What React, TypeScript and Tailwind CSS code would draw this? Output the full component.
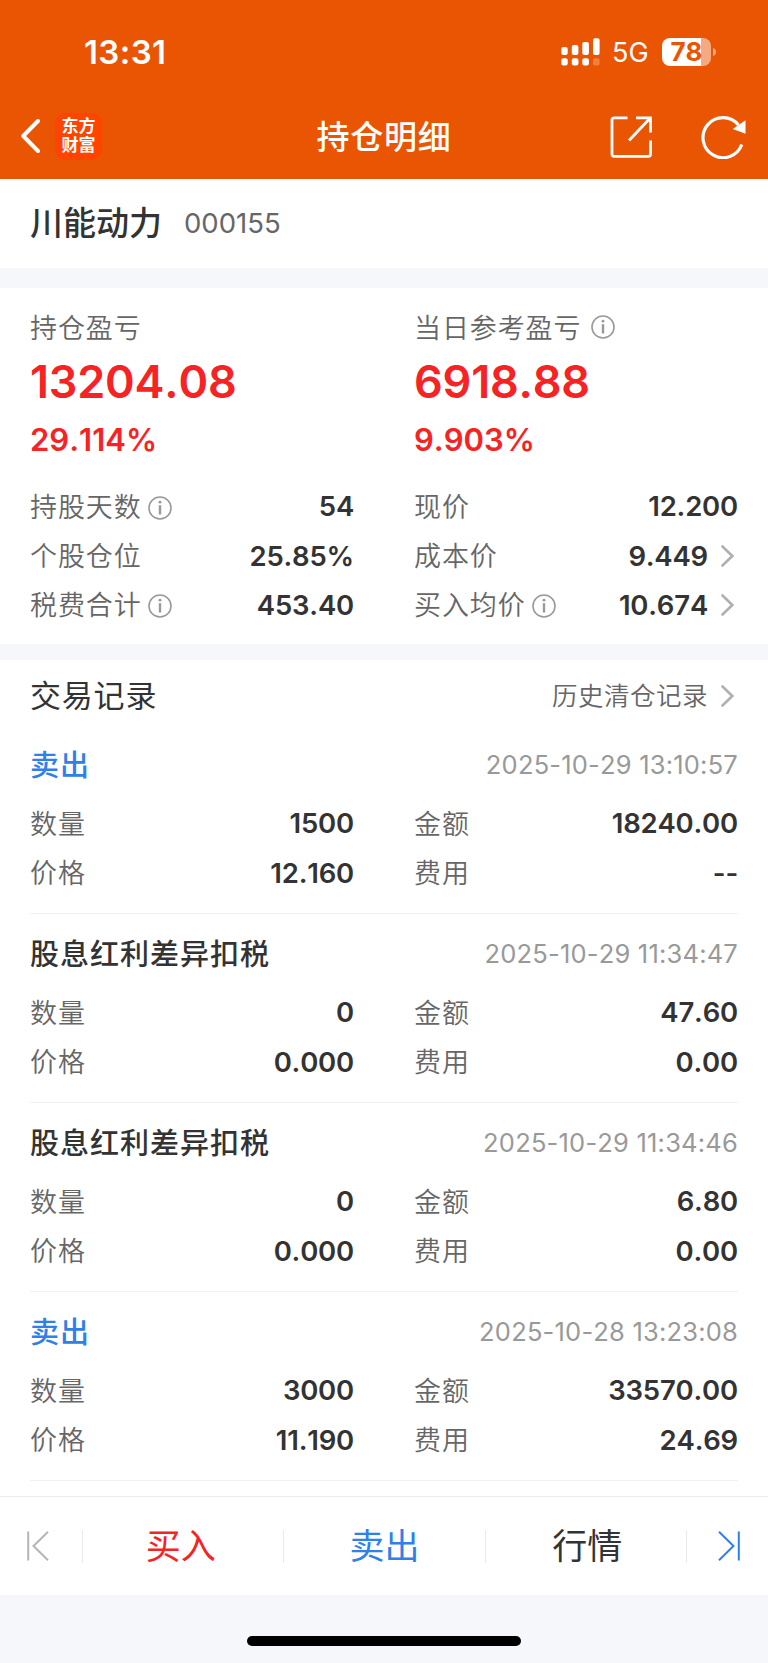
import type { ReactNode } from "react";

const cjk = "font-['Noto_Sans_CJK_SC',sans-serif]";
const num = "font-[Inter,sans-serif] [font-kerning:none]";

function InfoIcon({ className = "" }: { className?: string }) {
  return (
    <svg className={`h-6 w-6 shrink-0 ${className}`} viewBox="0 0 24 24" fill="none">
      <circle cx="12" cy="12" r="11" stroke="#999" strokeWidth="1.6" />
      <circle cx="12" cy="6.2" r="1.4" fill="#999" />
      <path d="M12 9.2v9.3" stroke="#999" strokeWidth="2.4" />
    </svg>
  );
}

function Chevron() {
  return (
    <svg className="mr-[4px] ml-[13px] h-[22px] w-[13px] shrink-0" viewBox="0 0 13 22" fill="none">
      <path d="M1.5 1.5 11.3 11 1.5 20.5" stroke="#b0b0b0" strokeWidth="2.6" strokeLinecap="round" />
    </svg>
  );
}

function Label({ children }: { children: ReactNode }) {
  return (
    <span className={`${cjk} pb-[2px] text-[27px] leading-none font-[350] tracking-[0.9px] text-[#666]`}>
      {children}
    </span>
  );
}

type CellProps = { label: string; value: string; info?: boolean; link?: boolean };

function Cell({ label, value, info, link }: CellProps) {
  return (
    <div className="flex h-[49.2px] items-center">
      <Label>{label}</Label>
      {info && <InfoIcon className="ml-[6px] mt-[2px]" />}
      <span className={`${num} ml-auto pt-[1px] text-[27.5px] leading-none font-semibold tracking-[-0.2px] text-[#333]`}>
        {value}
      </span>
      {link && <Chevron />}
    </div>
  );
}

type Trade = {
  title: string;
  sell?: boolean;
  time: string;
  qty: string;
  price: string;
  amount: string;
  fee: string;
};

const trades: Trade[] = [
  { title: "卖出", sell: true, time: "2025-10-29 13:10:57", qty: "1500", price: "12.160", amount: "18240.00", fee: "--" },
  { title: "股息红利差异扣税", time: "2025-10-29 11:34:47", qty: "0", price: "0.000", amount: "47.60", fee: "0.00" },
  { title: "股息红利差异扣税", time: "2025-10-29 11:34:46", qty: "0", price: "0.000", amount: "6.80", fee: "0.00" },
  { title: "卖出", sell: true, time: "2025-10-28 13:23:08", qty: "3000", price: "11.190", amount: "33570.00", fee: "24.69" },
];

function TradeItem({ t }: { t: Trade }) {
  return (
    <div className="h-[189px] border-b border-[#f1f1f3] pt-[6px]">
      <div className="flex h-[68px] items-center justify-between">
        <span
          className={`${cjk} pb-[3px] text-[29px] leading-none font-medium tracking-[1px] ${t.sell ? "text-[#2f80e8]" : "text-[#333]"}`}
        >
          {t.title}
        </span>
        <span className={`${num} pb-[1px] text-[25.5px] leading-none tracking-[0.2px] text-[#999]`}>{t.time}</span>
      </div>
      <div className="grid grid-cols-2 gap-x-[60px]">
        <Cell label="数量" value={t.qty} />
        <Cell label="金额" value={t.amount} />
        <Cell label="价格" value={t.price} />
        <Cell label="费用" value={t.fee} />
      </div>
    </div>
  );
}

function Summary({ label, value, pct, info }: { label: string; value: string; pct: string; info?: boolean }) {
  return (
    <div>
      <div className="flex h-[50px] items-center">
        <Label>{label}</Label>
        {info && <InfoIcon className="ml-[10px]" />}
      </div>
      <div
        className={`${num} flex h-[59px] items-center text-[45px] leading-none font-semibold tracking-[-0.2px] text-[#f52323]`}
      >
        {value}
      </div>
      <div className={`${num} flex h-[56px] items-center text-[31px] leading-none font-semibold text-[#f52323]`}>
        {pct}
      </div>
    </div>
  );
}

function StatusBar() {
  return (
    <div className="flex h-[103px] items-center pr-[52px] pl-[84px]">
      <span className={`${num} pt-[1px] text-[33px] leading-none font-semibold tracking-[0.4px]`}>13:31</span>
      <svg className="ml-auto h-[28px] w-[39px]" viewBox="0 0 39 28" fill="#fff">
        <rect x="0.3" y="9" width="6.4" height="8" rx="2" />
        <rect x="10.8" y="7" width="6.6" height="10" rx="2" />
        <rect x="21.3" y="4" width="6.6" height="13" rx="2" />
        <rect x="32" y="0.3" width="6.6" height="16.7" rx="2" />
        <rect x="0.3" y="20.3" width="6.4" height="7.2" rx="2" />
        <rect x="10.8" y="20.3" width="6.6" height="7.2" rx="2" />
        <rect x="21.3" y="20.3" width="6.6" height="7.2" rx="2" />
        <rect x="32" y="20.3" width="6.6" height="7.2" rx="2" opacity="0.25" />
      </svg>
      <span className={`${num} ml-[12px] w-[38px] pt-[1px] text-[27px] leading-none`}>5G</span>
      <div className="ml-[12px] flex items-center">
        <div
          className={`${num} flex h-[28px] w-[49px] items-center justify-center rounded-[8px] bg-linear-to-r from-white from-80% to-white/50 to-80% text-[26px] leading-none font-bold text-[#ea5504]`}
        >
          78
        </div>
        <svg className="ml-[2px] h-[8px] w-[3px]" viewBox="0 0 3 8" fill="#fff" opacity="0.5">
          <path d="M0 0C1.8.5 3 2 3 4S1.8 7.5 0 8Z" />
        </svg>
      </div>
    </div>
  );
}

function NavBar() {
  return (
    <div className="grid h-[76px] grid-cols-3 items-center">
      <div className="mt-[-10px] flex items-center pl-[20px]">
        <svg className="h-[36px] w-[20px]" viewBox="0 0 20 36" fill="none">
          <path d="M18 3 3.2 18 18 33" stroke="#fff" strokeWidth="4" strokeLinecap="round" strokeLinejoin="round" />
        </svg>
        <div className="ml-[15px] flex h-[47px] w-[47px] flex-col items-center rounded-[10px] bg-[#ff4400] pt-[4px] font-['Liberation_Serif','Noto_Sans_CJK_SC',serif] text-[17px] leading-[19px] font-bold">
          <span>东方</span>
          <span>财富</span>
        </div>
      </div>
      <h1 className={`${cjk} mt-[-12px] text-center text-[33px] leading-none font-medium tracking-[0.8px]`}>持仓明细</h1>
      <div className="mt-[-9px] flex items-center justify-end pr-[22px]">
        <svg className="h-[44px] w-[44px]" viewBox="0 0 44 44" fill="none" stroke="#fff" strokeWidth="2.8">
          <path d="M18.5 2.8H5a2 2 0 0 0-2 2v34.5a2 2 0 0 0 2 2h34.5a2 2 0 0 0 2-2V25.5" />
          <path d="M27 2.8h14.5V17.5M41.5 2.8 20 25.5" />
        </svg>
        <svg className="ml-[48px] h-[44px] w-[45px]" viewBox="0 0 45 44" fill="none">
          <path d="M40.8 29.5A20 20 0 1 1 37.5 10" stroke="#fff" strokeWidth="3.2" />
          <path d="M44.5 5.2v13.6L31.8 14Z" fill="#fff" />
        </svg>
      </div>
    </div>
  );
}

function Divider() {
  return <div className="h-[33px] w-px shrink-0 bg-[#e9e9eb]" />;
}

function Action({ color, children }: { color: string; children: ReactNode }) {
  return (
    <button className={`${cjk} flex-1 pb-[5px] text-center text-[35px] leading-none ${color}`}>{children}</button>
  );
}

export default function App() {
  return (
    <div className="flex h-[1663px] w-[768px] flex-col overflow-hidden bg-white">
      <header className="h-[179px] shrink-0 bg-[#ea5504] text-white">
        <StatusBar />
        <NavBar />
      </header>

      <section className="flex h-[89px] shrink-0 items-center pl-[30px]">
        <span className={`${cjk} pb-[4px] text-[33px] leading-none font-medium text-[#333]`}>川能动力</span>
        <span className={`${num} ml-[22px] text-[27.5px] leading-none text-[#666]`}>000155</span>
      </section>
      <div className="h-[20px] shrink-0 bg-[#f6f7fa]" />

      <section className="h-[356px] shrink-0 px-[30px] pt-[14px]">
        <div className="grid grid-cols-2 gap-x-[60px]">
          <Summary label="持仓盈亏" value="13204.08" pct="29.114%" />
          <Summary label="当日参考盈亏" value="6918.88" pct="9.903%" info />
        </div>
        <div className="mt-[15px] grid grid-cols-2 gap-x-[60px]">
          <Cell label="持股天数" value="54" info />
          <Cell label="现价" value="12.200" />
          <Cell label="个股仓位" value="25.85%" />
          <Cell label="成本价" value="9.449" link />
          <Cell label="税费合计" value="453.40" info />
          <Cell label="买入均价" value="10.674" info link />
        </div>
      </section>
      <div className="h-[16px] shrink-0 bg-[#f6f7fa]" />

      <section className="h-[836px] shrink-0 px-[30px]">
        <div className="flex h-[65px] items-center pt-[6px]">
          <h2 className={`${cjk} pb-[4px] text-[31px] leading-none tracking-[0.8px] text-[#333]`}>交易记录</h2>
          <span className={`${cjk} ml-auto pb-[3px] text-[25.5px] leading-none font-[350] tracking-[0.5px] text-[#666]`}>
            历史清仓记录
          </span>
          <Chevron />
        </div>
        {trades.map((t) => (
          <TradeItem key={t.time} t={t} />
        ))}
      </section>

      <nav className="flex h-[99px] shrink-0 items-center border-t border-[#ececee]">
        <button className="flex w-[82px] justify-center pr-[6px]">
          <svg className="h-[30px] w-[22px]" viewBox="0 0 22 30" fill="none" stroke="#b5b5b5" strokeWidth="2">
            <path d="M1.2.5v29M21 .8 6.5 15 21 29.2" />
          </svg>
        </button>
        <Divider />
        <Action color="text-[#f52323] -indent-[5px]">买入</Action>
        <Divider />
        <Action color="text-[#2f80e8]">卖出</Action>
        <Divider />
        <Action color="text-[#333] indent-[3px]">行情</Action>
        <Divider />
        <button className="flex w-[81px] justify-center pl-[3px]">
          <svg className="h-[30px] w-[22px]" viewBox="0 0 22 30" fill="none" stroke="#2f80e8" strokeWidth="2">
            <path d="M20.8.5v29M1 .8 15.5 15 1 29.2" />
          </svg>
        </button>
      </nav>
      <footer className="flex h-[68px] shrink-0 justify-center bg-[#f6f7fa] pt-[41px]">
        <div className="h-[10px] w-[274px] rounded-full bg-black" />
      </footer>
    </div>
  );
}
